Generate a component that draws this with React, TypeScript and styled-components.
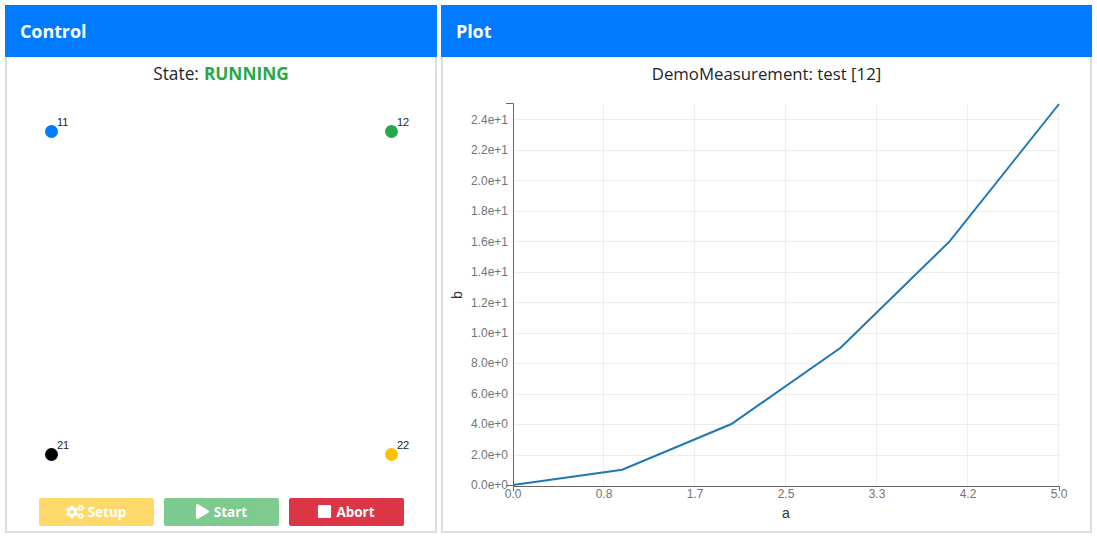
import React from 'react';
import styled, { createGlobalStyle } from 'styled-components';
import { FaCogs, FaPlay, FaStop } from 'react-icons/fa';

const GlobalStyle = createGlobalStyle`
  html, body {
    margin: 0;
    padding: 0;
    background: #fff;
  }
  body {
    font-family: "Open Sans", "Noto Sans", sans-serif;
    color: #212529;
  }
`;

const Page = styled.div`
  display: flex;
  gap: 4px;
  padding: 5px;
  height: 538px;
  box-sizing: border-box;
  overflow: hidden;
`;

const Panel = styled.section<{ $width: number }>`
  display: flex;
  flex-direction: column;
  width: ${(p) => p.$width}px;
  height: 528px;
`;

const PanelHeader = styled.h2`
  margin: 0;
  height: 52px;
  padding: 0 15px;
  display: flex;
  align-items: center;
  background: #007bff;
  color: #fff;
  font-size: 18px;
  font-weight: 700;
  letter-spacing: -0.1px;
`;

const PanelBody = styled.div`
  flex: 1;
  min-height: 0;
  display: flex;
  flex-direction: column;
  border: 2px solid #ddd;
  border-top: 0;
`;

const StateLine = styled.div`
  height: 34px;
  padding-bottom: 2px;
  box-sizing: border-box;
  display: flex;
  align-items: center;
  justify-content: center;
  gap: 5px;
  font-size: 17.3px;
`;

const StateValue = styled.strong`
  color: #28a745;
  font-weight: 700;
`;

const PinGrid = styled.div`
  flex: 1;
  display: grid;
  grid-template-columns: 13px 13px;
  grid-template-rows: 13px 13px;
  justify-content: space-between;
  align-content: space-between;
  padding: 34px 37px 37px 38px;
`;

const Pin = styled.div<{ $color: string }>`
  position: relative;
  width: 13px;
  height: 13px;
  border-radius: 50%;
  background: ${(p) => p.$color};
`;

const PinLabel = styled.span`
  position: absolute;
  left: 12px;
  top: -9px;
  font-family: "Liberation Sans", Arial, sans-serif;
  font-size: 11px;
  line-height: 13px;
  color: #212529;
`;

const ButtonRow = styled.div`
  display: flex;
  justify-content: center;
  gap: 10px;
  padding-bottom: 5px;
`;

const ActionButton = styled.button<{ $color: string; $dimmed?: boolean }>`
  width: 115px;
  height: 28px;
  padding: 0 0 1px;
  display: flex;
  align-items: center;
  justify-content: center;
  gap: 4px;
  border: 0;
  border-radius: 2px;
  background: ${(p) => p.$color};
  opacity: ${(p) => (p.$dimmed ? 0.6 : 1)};
  color: #fff;
  font-family: "Open Sans", sans-serif;
  font-size: 13.5px;
  font-weight: 700;
`;

const PlotTitle = styled.div`
  height: 34px;
  padding-bottom: 2px;
  box-sizing: border-box;
  display: flex;
  align-items: center;
  justify-content: center;
  font-size: 16.8px;
`;

const PlotSvg = styled.svg`
  display: block;
  width: 647px;
  height: 440px;
`;

const TickText = styled.text`
  font-family: "Liberation Sans", Arial, sans-serif;
  font-size: 12px;
  fill: #747474;
`;

const AxisTitle = styled.text`
  font-family: "Liberation Sans", Arial, sans-serif;
  font-size: 14px;
  fill: #333;
`;

const pins = [
  { id: 11, color: '#007bff' },
  { id: 12, color: '#28a745' },
  { id: 21, color: '#000' },
  { id: 22, color: '#ffc107' },
];

const left = 513;
const right = 1060;
const top = 103;
const bottom = 486;
const xAt = (a: number) => left + a * 109.2;
const yAt = (b: number) => 485 - b * 15.24;

const xTicks = ['0.0', '0.8', '1.7', '2.5', '3.3', '4.2', '5.0'];
const yTicks = [0, 2, 4, 6, 8, 10, 12, 14, 16, 18, 20, 22, 24];
const points = [0, 1, 2, 3, 4, 5].map((a) => `${xAt(a)},${yAt(a * a)}`).join(' ');

const expLabel = (v: number) => {
  const exp = v >= 10 ? 1 : 0;
  return `${(v / 10 ** exp).toFixed(1)}e+${exp}`;
};

const Chart: React.FC = () => (
  <PlotSvg viewBox="443 91 647 440">
    {yTicks.slice(1).map((v) => (
      <line key={v} x1={left} x2={right} y1={Math.round(yAt(v)) + 0.5} y2={Math.round(yAt(v)) + 0.5} stroke="#eee" />
    ))}
    {xTicks.slice(1).map((_, i) => {
      const x = Math.round(left + (i + 1) * 91) - 0.5;
      return <line key={i} x1={x} x2={x} y1={top} y2={bottom} stroke="#eee" />;
    })}
    <polyline points={points} fill="none" stroke="#1f77b4" strokeWidth="2" />
    <path d="M506 103.5H513.5V486M506 485.5H513" fill="none" stroke="#666" />
    <path d="M513 486.5H1060M513.5 486V491M1059.5 486V491" fill="none" stroke="#666" />
    {yTicks.map((v) => (
      <TickText key={v} x={508} y={yAt(v) + 4.4} textAnchor="end">
        {expLabel(v)}
      </TickText>
    ))}
    {xTicks.map((label, i) => (
      <TickText key={label} x={left + i * 91} y={498} textAnchor="middle">
        {label}
      </TickText>
    ))}
    <AxisTitle x={786} y={518} textAnchor="middle">a</AxisTitle>
    <AxisTitle x={0} y={0} textAnchor="middle" transform="translate(462 295) rotate(-90)">b</AxisTitle>
  </PlotSvg>
);

const App: React.FC = () => (
  <Page>
    <GlobalStyle />
    <Panel $width={432}>
      <PanelHeader>Control</PanelHeader>
      <PanelBody>
        <StateLine>
          State: <StateValue>RUNNING</StateValue>
        </StateLine>
        <PinGrid>
          {pins.map((pin) => (
            <Pin key={pin.id} $color={pin.color}>
              <PinLabel>{pin.id}</PinLabel>
            </Pin>
          ))}
        </PinGrid>
        <ButtonRow>
          <ActionButton $color="#ffc107" $dimmed>
            <FaCogs size={18} /> Setup
          </ActionButton>
          <ActionButton $color="#28a745" $dimmed>
            <FaPlay size={15} /> Start
          </ActionButton>
          <ActionButton $color="#dc3545">
            <FaStop size={15} /> Abort
          </ActionButton>
        </ButtonRow>
      </PanelBody>
    </Panel>
    <Panel $width={651}>
      <PanelHeader>Plot</PanelHeader>
      <PanelBody>
        <PlotTitle>DemoMeasurement: test [12]</PlotTitle>
        <Chart />
      </PanelBody>
    </Panel>
  </Page>
);

export default App;
